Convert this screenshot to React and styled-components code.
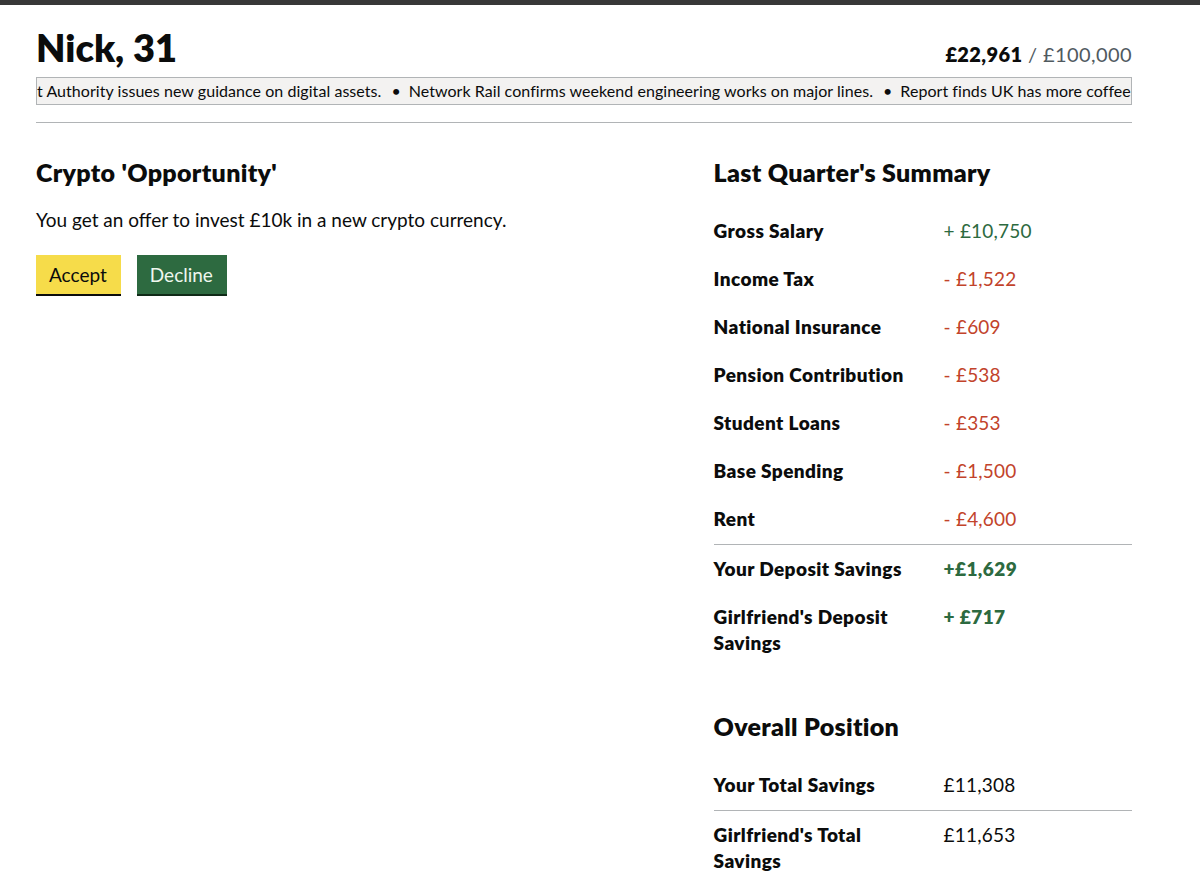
import React from 'react';
import styled, { createGlobalStyle } from 'styled-components';

const GlobalStyle = createGlobalStyle`
  body {
    margin: 0;
    background: #ffffff;
    font-family: 'Lato', 'Noto Sans', Arial, sans-serif;
    color: #0b0c0c;
  }
  * { box-sizing: border-box; }
`;

const TopBar = styled.div`
  height: 5px;
  background: #383838;
`;

const Page = styled.main`
  padding: 20px 68px 0 36px;
`;

const Header = styled.header`
  display: flex;
  justify-content: space-between;
  align-items: baseline;
`;

const Title = styled.h1`
  margin: 0;
  font-size: 38px;
  line-height: 44px;
  font-weight: 800;
`;

const Balance = styled.div`
  font-size: 20px;
  letter-spacing: 0.4px;
  color: #505a5f;

  strong {
    color: #0b0c0c;
    font-weight: 800;
  }
`;

const Ticker = styled.div`
  margin-top: 8px;
  border: 1px solid #b1b4b6;
  background: #f3f2f1;
  overflow: hidden;
  white-space: nowrap;
  font-size: 16px;
  letter-spacing: 0.05px;
  line-height: 26px;
`;

const TickerItem = styled.span`
  &:not(:first-child)::before {
    content: '•';
    margin: 0 8px 0 10px;
  }
`;

const Rule = styled.hr`
  margin: 17px 0 0;
  border: 0;
  border-top: 1px solid #b1b4b6;
`;

const Grid = styled.div`
  display: grid;
  grid-template-columns: 3fr 2fr;
  margin-top: 34px;
`;

const Column = styled.section`
  padding-left: ${(p) => (p.$right ? '20px' : '0')};
`;

const Heading = styled.h2`
  margin: 0 0 20px;
  font-size: 25px;
  line-height: 30px;
  font-weight: 800;
  letter-spacing: 0.3px;
`;

const Body = styled.p`
  margin: 0;
  font-size: 19px;
  line-height: 25px;
`;

const Actions = styled.div`
  display: flex;
  gap: 16px;
  margin-top: 23px;
`;

const Button = styled.button`
  font-family: inherit;
  font-size: 19px;
  line-height: 23px;
  padding: 8px 14px 8px 13px;
  border: 0;
  border-radius: 0;
  cursor: pointer;
  background: ${(p) => (p.$primary ? '#2d6a40' : '#f6dc4a')};
  color: ${(p) => (p.$primary ? '#eef7ee' : '#0b0c0c')};
  box-shadow: 0 2px 0 ${(p) => (p.$primary ? '#0f2a17' : '#0b0c0c')};
`;

const Table = styled.div`
  margin-bottom: ${(p) => p.$mb || '0'};
`;

const Row = styled.div`
  display: grid;
  grid-template-columns: 230px 1fr;
  padding: 11px 0 ${(p) => (p.$divider ? '12px' : '11px')};
  border-bottom: 1px solid ${(p) => (p.$divider ? '#b1b4b6' : 'transparent')};
  font-size: 19px;
  line-height: 26px;
  margin-bottom: ${(p) => (p.$divider ? '0' : '-1px')};
`;

const Label = styled.div`
  font-weight: 800;
  letter-spacing: 0.4px;
  padding-right: 20px;
`;

const Value = styled.div`
  font-weight: ${(p) => (p.$bold ? 800 : 400)};
  letter-spacing: ${(p) => (p.$bold ? '0.4px' : '0.2px')};
  color: ${(p) =>
    p.$tone === 'gain' ? '#2d6a40' : p.$tone === 'loss' ? '#c2432b' : '#0b0c0c'};
`;

const news = [
  't Authority issues new guidance on digital assets.',
  'Network Rail confirms weekend engineering works on major lines.',
  'Report finds UK has more coffee',
];

const summary = [
  { label: 'Gross Salary', value: '+ £10,750', tone: 'gain' },
  { label: 'Income Tax', value: '- £1,522', tone: 'loss' },
  { label: 'National Insurance', value: '- £609', tone: 'loss' },
  { label: 'Pension Contribution', value: '- £538', tone: 'loss' },
  { label: 'Student Loans', value: '- £353', tone: 'loss' },
  { label: 'Base Spending', value: '- £1,500', tone: 'loss' },
  { label: 'Rent', value: '- £4,600', tone: 'loss', divider: true },
  { label: 'Your Deposit Savings', value: '+£1,629', tone: 'gain', bold: true },
  { label: "Girlfriend's Deposit Savings", value: '+ £717', tone: 'gain', bold: true },
];

const overall = [
  { label: 'Your Total Savings', value: '£11,308', divider: true },
  { label: "Girlfriend's Total Savings", value: '£11,653' },
];

export default function App() {
  return (
    <>
      <GlobalStyle />
      <TopBar />
      <Page>
        <Header>
          <Title>Nick, 31</Title>
          <Balance>
            <strong>£22,961</strong> / £100,000
          </Balance>
        </Header>

        <Ticker>
          {news.map((item) => (
            <TickerItem key={item}>{item}</TickerItem>
          ))}
        </Ticker>

        <Rule />

        <Grid>
          <Column>
            <Heading>Crypto 'Opportunity'</Heading>
            <Body>You get an offer to invest £10k in a new crypto currency.</Body>
            <Actions>
              <Button>Accept</Button>
              <Button $primary>Decline</Button>
            </Actions>
          </Column>

          <Column $right>
            <Heading>Last Quarter's Summary</Heading>
            <Table $mb="44px">
              {summary.map((r) => (
                <Row key={r.label} $divider={r.divider}>
                  <Label>{r.label}</Label>
                  <Value $tone={r.tone} $bold={r.bold}>{r.value}</Value>
                </Row>
              ))}
            </Table>

            <Heading>Overall Position</Heading>
            <Table>
              {overall.map((r) => (
                <Row key={r.label} $divider={r.divider}>
                  <Label>{r.label}</Label>
                  <Value>{r.value}</Value>
                </Row>
              ))}
            </Table>
          </Column>
        </Grid>
      </Page>
    </>
  );
}
